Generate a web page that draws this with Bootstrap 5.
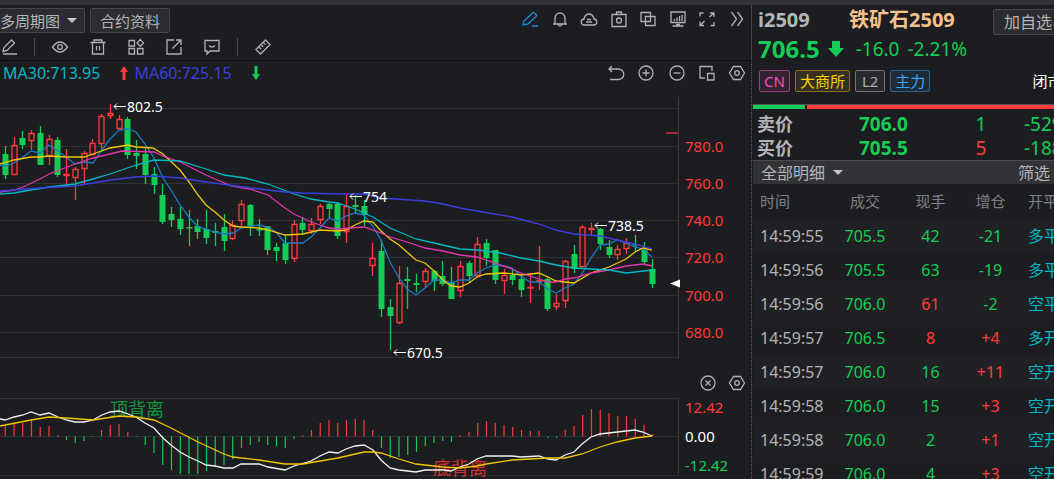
<!DOCTYPE html>
<html lang="zh-CN">
<head>
<meta charset="utf-8">
<meta name="viewport" content="width=device-width, initial-scale=1">
<title>铁矿石2509</title>
<link href="https://cdn.jsdelivr.net/npm/bootstrap@5.3.0/dist/css/bootstrap.min.css" rel="stylesheet">
<style>
:root{--up:#ff3b3b;--down:#14cc55;--ink:#b4b5b8;--line:#46474a;--bar:#323336}
body{background:#1c1d20;color:var(--ink);font-family:"Noto Sans","Noto Sans CJK SC",sans-serif;font-size:15px;line-height:20px}
.terminal{height:100vh;border-top:5px solid var(--bar)}
.side-panel{flex:0 0 302px;padding-left:1px}
.upper-tools{height:55px;border-right:1px solid var(--line)}
.lower-zone{border-top:1px dotted #000;border-right:1px dotted #606164}
.menu-row{gap:5px;padding-top:3px}
.tool-btn{background:#2b2c2f;border:1px solid var(--line);border-radius:2px;color:var(--ink);padding:0 9px;height:25px;line-height:22px;white-space:nowrap}
.tool-cut{border-left:0;border-radius:0 2px 2px 0;padding:0 7px 0 0;display:flex;align-items:center;gap:7px}
.add-btn{font-size:16px;font-weight:400;height:26px;line-height:25px;width:80px;margin-right:-19px;padding:0 0 0 10px;text-align:left}
.caret{width:0;height:0;border:5px solid transparent;border-top-color:#c4c5c8;border-bottom:0;display:inline-block}
.ico{background:none;border:0;padding:0;color:#b0b1b4;line-height:0;display:flex;justify-content:center;align-items:center}
.ico svg{width:18px;height:18px;fill:none;stroke:currentColor;stroke-width:1.3}
.ico.pen{color:#1a8fe8}
.wide-ico{padding-top:5px}
.wide-ico .ico{width:38px}
.wide-ico .ico.first{width:20px}
.sep{width:1px;height:18px;background:#4a4b4e;margin:0 6px}
.sep.wide{margin-left:14px}
.top-icons{width:225px;margin-right:5px}
.chart-icons{width:139px;margin-right:5px}
.sub-icons{width:47px;height:19px;margin-right:5px}
.ma-row{height:24px;font-size:16px;padding-left:3px}
.c30{color:#00b9c4}.c60{color:#3a3fdc}
.plot{display:block;width:100%;font-size:14px}
.plot .axis{font-size:15px}
.plot .mark-text{font-size:18px}
.up{color:var(--up)}.down{color:var(--down)}
.head-line{height:30px;font-size:20px;line-height:30px;padding-left:5px}
.contract{width:91px}
.contract-name{color:#f5c28c}
.price-line{height:28px;font-size:19px;line-height:28px;padding-left:5px}
.last{font-size:24px}
.tags{gap:5px;margin:7px 0 12px 6px}
.tag{border:1px solid;border-radius:2px;height:22px;line-height:20px;padding:0 4px}
.t-cn{color:#f94fb9;border-color:#95427e;background:#33222f}
.t-ex{color:#ffd000;border-color:#8a7414;background:#33301f}
.t-l2{color:#adaeb1;border-color:#747578;background:#28292c;padding:0 6px}
.t-main{color:#3aa5fa;border-color:#2b6290;background:#1f2c38}
.state{margin-left:97px;line-height:22px}
.force-bar{border-top:1px solid #55565a;height:5px;margin-bottom:3px;gap:2px}
.f-sell{width:52px;background:var(--down)}
.f-buy{background:var(--up)}
.quote{display:grid;grid-template-columns:102px 83px 78px 90px;font-size:19px;line-height:24px;padding-left:4px}
.quote b.name{font-size:18px}
.diff{padding-left:4px}
.detail-head{height:24px;background:var(--bar);border-top:1px solid #4a4b4e;font-size:16px;padding-left:8px}
.detail-head .filter{margin-left:171px}
.deals{width:350px;table-layout:fixed;border-collapse:collapse}
.deals th{height:35px;color:#808185;font-weight:400;text-align:center;padding:0 0 1px}
.deals td{height:34px;text-align:center;padding:0;font-size:16px}
.deals th:first-child,.deals td:first-child{text-align:left;padding-left:7px}
.deals th:last-child,.deals td:last-child{text-align:left;padding-left:13px}
.deals tbody tr:nth-child(odd){background:#202124}
.deals td:last-child{color:#00b9c4}
.w1{width:82px}.w2{width:60px}.w3{width:71px}.w4{width:49px}
</style>
</head>
<body>
<main class="terminal d-flex overflow-hidden">
  <section class="flex-grow-1 overflow-hidden">
    <header class="upper-tools">
      <div class="d-flex justify-content-between align-items-center">
        <div class="menu-row d-flex">
          <button class="tool-btn tool-cut" type="button">多周期图<span class="caret"></span></button>
          <button class="tool-btn" type="button">合约资料</button>
        </div>
        <div class="top-icons d-flex justify-content-between">
          <button class="ico pen" aria-label="画线"><svg viewBox="0 0 18 18"><path d="M2 15l1-4 8.500-8q1-1 2 0l1.500 1.500q1 1 0 2L7 14l-5 1zM11 16h6"/></svg></button>
          <button class="ico" aria-label="提醒"><svg viewBox="0 0 18 18"><path d="M2 14h14M4 14V8a5 5 0 0 1 10 0v6M7 14.500q2 3 4 0"/></svg></button>
          <button class="ico" aria-label="云"><svg viewBox="0 0 18 18"><path d="M4.500 15a3 3 0 0 1-.5-6q1-5 5-5t5 5a3 3 0 0 1-.5 6zM7 9.500h4M6 12h6"/></svg></button>
          <button class="ico" aria-label="截图"><svg viewBox="0 0 18 18"><path d="M2 4.500h14v12H2zM6.500 4V2h5v2"/><circle cx="9" cy="10.500" r="2.500"/></svg></button>
          <button class="ico" aria-label="叠加"><svg viewBox="0 0 18 18"><path d="M2 2.500h9.500v9H2zM6.500 6.500H16v9H6.500z"/></svg></button>
          <button class="ico" aria-label="行情"><svg viewBox="0 0 18 18"><path d="M2 2h14v10.500H2zM7 14.500h4M3.500 16h11"/><path d="M5.500 11V9M8 11V7.500M10.500 11V6M13 11V5"/></svg></button>
          <button class="ico" aria-label="全屏"><svg viewBox="0 0 18 18"><path d="M2 6.500V3h3.500M16 12v3.500h-3.500M12 3h4v4M16 3l-4.500 4M6 15.500H2v-4M2 15.500L6.500 11"/></svg></button>
          <button class="ico" aria-label="更多"><svg viewBox="0 0 18 18"><path d="M3.500 2l5 7-5 7M9.500 2l5 7-5 7"/></svg></button>
        </div>
      </div>
      <div class="wide-ico d-flex align-items-center">
        <button class="ico first" aria-label="编辑"><svg viewBox="0 0 18 18"><path d="M2 13.500l1-4L10.500 2l3 3L6 12.500l-4 1zM2 16h14"/></svg></button>
        <span class="sep wide"></span>
        <button class="ico" aria-label="显示"><svg viewBox="0 0 18 18"><path d="M1.500 9Q9-1 16.500 9 9 19 1.500 9z"/><circle cx="9" cy="9" r="2.300"/></svg></button>
        <button class="ico" aria-label="删除"><svg viewBox="0 0 18 18"><path d="M1.500 4.500h15M5 4V2h8v2M3.500 4.500v11.500h11V4.500M7.500 8v4.500M10.500 8v4.500"/></svg></button>
        <button class="ico" aria-label="组件"><svg viewBox="0 0 18 18"><path d="M2 2.500h5.500V8H2zM2 10.500h5.500V16H2zM10.500 10.500H16V16h-5.500zM13.200 1.500L16.500 5l-3.300 3.300L10 5z"/></svg></button>
        <button class="ico" aria-label="导出"><svg viewBox="0 0 18 18"><path d="M9 2H2v14h14V9M11 2h5v5M16 2L7.500 10.500"/></svg></button>
        <button class="ico" aria-label="留言"><svg viewBox="0 0 18 18"><path d="M2 2.500h14V13H7l-3 3v-3H2zM6 7.500q3 3 6 0"/></svg></button>
        <span class="sep"></span>
        <button class="ico" aria-label="测量"><svg viewBox="0 0 18 18"><path d="M2 11.500L11.500 2 16 6.500 6.500 16zM5 9l2 2M7.200 6.800l2 2M9.400 4.600l2 2"/></svg></button>
      </div>
    </header>
    <div class="lower-zone">
      <div class="ma-row d-flex align-items-center justify-content-between">
        <div class="d-flex align-items-center">
          <span class="c30">MA30:713.95</span>
          <svg class="ms-3 me-1" width="14" height="16" viewBox="0 0 14 16"><path fill="#ff3b3b" d="M8 1l4 6H9.500v8h-3V7H4z"/></svg>
          <span class="c60">MA60:725.15</span>
          <svg class="ms-3" width="14" height="16" viewBox="0 0 14 16"><path fill="#14cc55" d="M8 15L4 9h2.500V1h3v8H12z"/></svg>
        </div>
        <div class="chart-icons d-flex justify-content-between">
          <button class="ico" aria-label="撤销"><svg viewBox="0 0 18 18"><path d="M5 2L2 5l3 3M2 5h9.500a5 5 0 0 1 0 10.500H3"/></svg></button>
          <button class="ico" aria-label="放大"><svg viewBox="0 0 18 18"><circle cx="9" cy="9" r="7"/><path d="M9 5.500v7M5.500 9h7"/></svg></button>
          <button class="ico" aria-label="缩小"><svg viewBox="0 0 18 18"><circle cx="9" cy="9" r="7"/><path d="M5.500 9h7"/></svg></button>
          <button class="ico" aria-label="窗口"><svg viewBox="0 0 18 18"><path d="M14 7V2.500H2V14h5M9.500 9.500H16V16H9.500z"/></svg></button>
          <button class="ico" aria-label="设置"><svg viewBox="0 0 18 18"><path d="M5.500 2.500h7L16.500 9l-4 6.500h-7L1.500 9z"/><circle cx="9" cy="9" r="2.300"/></svg></button>
        </div>
      </div>
      <svg class="plot" id="price" viewBox="0 85 751 288"></svg>
      <div class="d-flex justify-content-end">
        <div class="sub-icons d-flex justify-content-between align-items-center">
          <button class="ico" aria-label="关闭"><svg viewBox="0 0 18 18"><circle cx="9" cy="9" r="7"/><path d="M6.500 6.500l5 5M11.500 6.500l-5 5"/></svg></button>
          <button class="ico" aria-label="指标设置"><svg viewBox="0 0 18 18"><path d="M5.500 2.500h7L16.500 9l-4 6.500h-7L1.500 9z"/><circle cx="9" cy="9" r="2.300"/></svg></button>
        </div>
      </div>
      <svg class="plot" id="macd" viewBox="0 392 751 87"></svg>
    </div>
  </section>

  <aside class="side-panel overflow-hidden text-nowrap">
    <div class="head-line d-flex fw-bold">
      <span class="contract">i2509</span><span class="contract-name">铁矿石2509</span>
      <button class="tool-btn add-btn mt-1 ms-auto flex-shrink-0" type="button">加自选</button>
    </div>
    <div class="price-line d-flex align-items-center down">
      <b class="last">706.5</b>
      <svg class="mx-2" width="16" height="18" viewBox="0 0 16 18"><path fill="#14cc55" d="M4 1h8v7h4l-8 9-8-9h4z"/></svg>
      <span class="ms-1 me-2">-16.0</span><span>-2.21%</span>
    </div>
    <div class="tags d-flex">
      <span class="tag t-cn">CN</span><span class="tag t-ex">大商所</span><span class="tag t-l2">L2</span><span class="tag t-main">主力</span>
      <span class="state text-white">闭市</span>
    </div>
    <div class="force-bar d-flex"><span class="f-sell"></span><span class="f-buy flex-grow-1"></span></div>
    <div class="quote"><b class="name">卖价</b><b class="down">706.0</b><span class="down text-center">1</span><span class="down diff">-529</span></div>
    <div class="quote"><b class="name">买价</b><b class="down">705.5</b><span class="up text-center">5</span><span class="down diff">-188</span></div>
    <div class="detail-head d-flex align-items-center">全部明细<span class="caret ms-2 mx-1"></span><span class="filter">筛选</span><span class="caret ms-1"></span></div>
    <table class="deals">
      <colgroup><col class="w1"><col class="w2"><col class="w3"><col class="w4"><col></colgroup>
      <thead><tr><th>时间</th><th>成交</th><th>现手</th><th>增仓</th><th>开平</th></tr></thead>
      <tbody>
        <tr><td>14:59:55</td><td class="down">705.5</td><td class="down">42</td><td class="down">-21</td><td>多平</td></tr>
        <tr><td>14:59:56</td><td class="down">705.5</td><td class="down">63</td><td class="down">-19</td><td>多平</td></tr>
        <tr><td>14:59:56</td><td class="down">706.0</td><td class="up">61</td><td class="down">-2</td><td>空平</td></tr>
        <tr><td>14:59:57</td><td class="down">706.5</td><td class="up">8</td><td class="up">+4</td><td>多开</td></tr>
        <tr><td>14:59:57</td><td class="down">706.0</td><td class="down">16</td><td class="up">+11</td><td>空开</td></tr>
        <tr><td>14:59:58</td><td class="down">706.0</td><td class="down">15</td><td class="up">+3</td><td>空开</td></tr>
        <tr><td>14:59:58</td><td class="down">706.0</td><td class="down">2</td><td class="up">+1</td><td>空开</td></tr>
        <tr><td>14:59:59</td><td class="down">706.0</td><td class="down">4</td><td class="up">+3</td><td>空开</td></tr>
      </tbody>
    </table>
  </aside>
</main>
<script src="https://cdn.jsdelivr.net/npm/bootstrap@5.3.0/dist/js/bootstrap.bundle.min.js"></script>
<script>
const UP = '#ff3b3b', DOWN = '#14cc55', STEP = 8.75, X0 = 5.25;
// direction, high, body top, body bottom, low (plot units)
const candles = `g146,154,175,179 r137,145,175,175 g131,138,145,149 r130,133,141,150 g126,133,165,165 r135,139,156,165 g137,140,175,177 r149,174,176,186 r167,169,178,200 r151,153,169,184 r139,143,155,155 r114,116,144,151 r104,113,116,119 r115,119,129,131 g117,119,155,159 g140,153,156,169 g149,154,175,184 g167,174,185,194 g184,195,222,224 g207,214,220,227 g207,219,229,235 g210,227,228,246 g219,226,232,239 g210,229,238,244 g223,231,233,246 g214,227,241,251 r220,225,239,240 r200,204,221,227 g204,205,227,236 g219,229,230,236 g226,226,250,255 g243,247,251,261 g235,243,260,264 r220,224,259,262 g217,223,230,235 r218,224,231,234 r204,206,220,224 g203,204,209,218 g202,204,236,239 r195,206,232,243 g195,205,207,214 g200,206,215,226 r243,258,266,276 g240,251,309,317 g299,307,316,350 r266,283,323,324 g267,279,281,309 g274,283,285,292 r268,271,282,287 g270,271,281,291 g261,276,284,286 g267,282,299,299 r261,266,291,297 g261,263,276,283 r237,244,276,278 g239,243,258,266 g250,250,280,284 r269,275,281,294 g269,275,280,285 g276,279,290,297 r273,287,288,303 r246,280,282,290 g277,279,309,311 r294,303,307,310 r260,261,301,308 g245,254,269,273 r225,227,267,267 r223,228,230,235 g228,229,244,250 g240,247,255,258 r245,249,255,260 r238,243,249,254 g235,244,245,252 g242,250,262,264 g259,269,284,288`.split(' ');
const averages = {
 '#1a7bc4':'0,165 5,166 14,163 23,157 31,151 40,153 49,145 58,151 66,157 75,164 84,162 93,163 102,150 110,139 119,130 128,129 136,132 145,144 154,158 163,178 171,190 180,205 189,217 198,227 206,229 215,232 224,234 233,233 241,228 250,226 259,225 268,227 276,232 285,243 303,243 311,237 320,228 329,218 338,221 346,216 355,213 364,215 372,225 381,240 390,262 399,278 407,289 416,295 425,288 434,280 443,280 451,283 460,280 469,280 477,273 486,268 495,265 504,266 512,268 521,276 530,282 539,282 548,289 556,293 565,288 574,284 582,274 591,258 600,245 609,244 617,240 626,243 635,247 643,249 652,257',
 '#f2c500':'0,164 14,160 31,157 40,157 49,156 66,157 84,157 93,154 110,148 128,145 136,147 153,148 163,154 180,170 189,182 198,195 206,205 215,212 224,220 233,226 241,227 259,228 268,230 285,235 303,234 320,230 338,231 346,230 355,225 364,221 373,222 381,231 390,239 399,245 416,260 425,263 434,271 443,280 451,286 460,287 469,283 477,277 486,274 504,273 522,275 539,273 548,277 556,281 565,282 574,283 591,273 609,267 626,259 635,252 643,248 652,250',
 '#e535ad':'0,192 14,190 23,187 40,179 49,174 75,164 93,158 110,154 122,151 154,152 163,156 180,162 206,175 215,179 232,186 250,189 268,195 285,208 294,214 311,222 329,228 338,229 364,227 381,233 390,237 407,242 425,248 443,251 460,255 477,257 495,263 512,269 521,273 530,276 548,282 556,282 565,279 574,278 591,273 609,270 626,266 643,264 652,266',
 '#00b9c4':'0,194 14,193 31,190 49,187 75,184 93,179 110,174 136,165 154,160 180,161 206,169 224,175 245,178 268,184 294,194 311,199 329,202 338,203 355,209 373,217 390,228 416,239 434,243 460,249 478,250 500,253 521,258 539,261 556,265 574,268 591,269 609,270 626,273 635,272 652,270',
 '#3a3fe0':'0,191 40,188 75,186 110,180 136,177 154,176 180,178 206,182 236,186 268,190 285,192 303,193 338,194 364,194 381,198 425,201 443,204 460,208 477,211 512,217 539,224 556,230 574,234 600,236 617,240 635,244 652,249'
};
const hist = [425,423,423,420,427,426,435,440,443,441,437,430,425,424,432,437,445,453,465,470,474,474,474,471,467,465,459,448,445,442,445,446,448,439,435,430,423,420,423,420,419,420,430,448,458,457,455,452,446,443,441,442,435,432,423,421,423,425,427,430,431,431,438,438,430,426,415,409,410,413,416,416,419,425,434];
const dif = '0,419 5,420 14,417 23,415 31,412 40,415 49,413 58,417 66,420 75,422 84,422 93,420 102,415 110,412 119,411 128,414 136,417 145,423 154,428 163,438 171,445 180,452 189,457 198,461 206,465 215,466 224,468 233,468 241,464 259,464 268,467 285,470 294,466 311,461 320,456 329,452 338,453 346,449 355,446 364,445 373,450 381,460 390,468 399,470 416,472 425,470 443,470 451,471 460,467 469,464 477,459 486,456 512,456 521,457 539,456 548,459 556,460 565,455 574,452 582,444 591,437 600,434 617,432 626,431 635,430 643,432 652,436';
const dea = '0,426 31,420 49,417 66,418 93,420 119,416 136,417 154,420 171,428 198,442 224,454 233,457 259,460 285,464 303,464 320,461 338,458 364,452 373,452 381,453 399,459 416,464 443,467 460,468 477,466 486,464 512,460 548,458 565,458 582,454 600,447 617,442 635,438 652,436';
const line = (pts, c, w = 1.3) => `<polyline points="${pts}" fill="none" stroke="${c}" stroke-width="${w}"/>`;
const text = (x, y, s, c, k = '') => `<text x="${x}" y="${y}" fill="${c}" class="${k}">${s}</text>`;
const grid = (ys, x = 679) => ys.map(y => `<path d="M0 ${y + .5}H${x}" stroke="#303134"/>`).join('');

let p = grid([108,146,183,220,257,295,332,357]) + '<path d="M678.5 97V357" stroke="#3a3b3e"/><path d="M666 133H678" stroke="#a52c2f" stroke-width="2"/>';
candles.forEach((row, i) => {
  const [h, t, b, l] = row.slice(1).split(',').map(Number), x = Math.round(X0 + i * STEP - .5) + .5;
  if (row[0] === 'r') p += `<path d="M${x} ${h}V${t}M${x} ${b}V${l}M${x-2.5} ${t+.5}h5V${Math.max(b-.5,t+1)}h-5z" fill="none" stroke="${UP}" stroke-width="1.3"/>`;
  else p += `<path d="M${x} ${h}V${l}" stroke="${DOWN}" stroke-width="1.3"/><rect x="${x-3}" y="${t}" width="6" height="${Math.max(b-t,1.5)}" fill="${DOWN}"/>`;
});
for (const c in averages) p += line(averages[c], c);
[[113,106,'802.5'],[349,196,'754'],[393,352,'670.5'],[594,225,'738.5']].forEach(([x, y, s]) => {
  p += `<path d="M${x+13} ${y+.5}H${x+1}M${x+4} ${y-2.5}l-3 3 3 3" stroke="#fff" fill="none"/>` + text(x + 14, y + 6, s, '#fff');
});
[780,760,740,720,700,680].forEach((v, i) => p += text(685, [152,189,226,263,301,338][i], v + '.0', UP, 'axis'));
p += '<path d="M670 283.500l10-4v8z" fill="#fff"/>';
document.getElementById('price').innerHTML = p;

let m = grid([398,436,475]) + '<path d="M678.5 398V475" stroke="#3a3b3e"/>';
hist.forEach((y, i) => m += `<path d="M${X0 + i * STEP} 436.500V${y}" stroke="${y < 436.5 ? UP : DOWN}" stroke-width="1.2"/>`);
m += text(110, 416, '顶背离', '#10983f', 'mark-text') + text(433, 475, '底背离', '#d52f31', 'mark-text');
m += line(dif, '#f2f2f2') + line(dea, '#f2c500') + text(685, 413, '12.42', UP, 'axis') + text(685, 442, '0.00', '#fff', 'axis') + text(685, 471, '-12.42', DOWN, 'axis');
document.getElementById('macd').innerHTML = m;
</script>
</body>
</html>
